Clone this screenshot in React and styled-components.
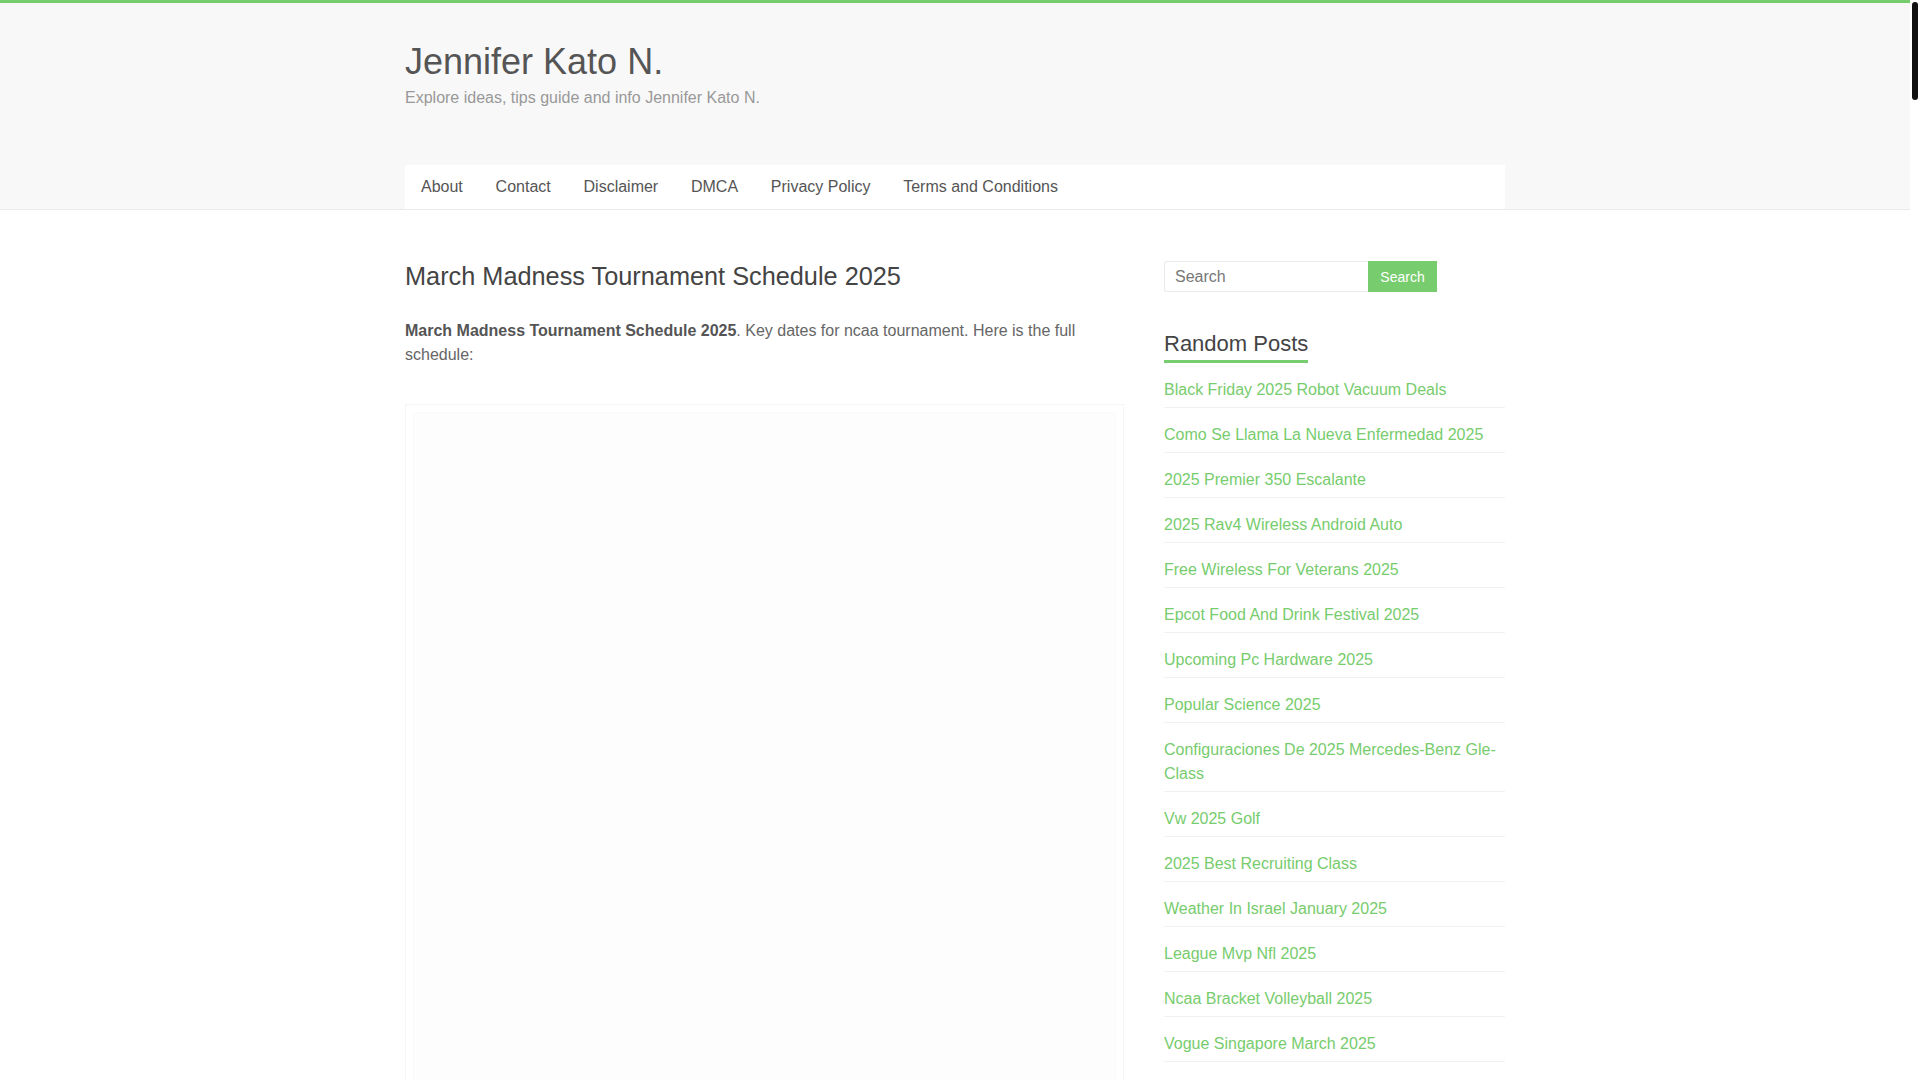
import React from 'react';
import styled, { createGlobalStyle } from 'styled-components';

const GlobalStyle = createGlobalStyle`
  html, body {
    margin: 0;
    padding: 0;
    background: #ffffff;
  }

  html {
    scrollbar-width: none;
  }

  html::-webkit-scrollbar {
    display: none;
  }

  body {
    font-family: 'Liberation Sans', Arial, sans-serif;
    color: #666666;
  }
`;

const green = '#77cc6d';

// the page is drawn as if a 10px scrollbar takes the right edge
const Page = styled.div`
  width: calc(100vw - 10px);
`;

const ScrollTrack = styled.div`
  position: fixed;
  top: 0;
  right: 0;
  width: 10px;
  height: 100vh;
  background: #ffffff;
  z-index: 10;
`;

const ScrollThumb = styled.div`
  position: absolute;
  top: 2px;
  left: 2px;
  width: 6px;
  height: 98px;
  border-radius: 3px;
  background: #111111;
`;

const Header = styled.header`
  background: #f8f8f8;
  border-top: 3px solid ${green};
  border-bottom: 1px solid #eaeaea;
`;

const Wrap = styled.div`
  width: 1100px;
  margin: 0 auto;
`;

const Branding = styled.div`
  padding: 37px 0 55px;
`;

const SiteTitle = styled.h1`
  margin: 0;
  font-size: 36px;
  line-height: 43px;
  font-weight: 400;
  color: #555555;
`;

const Tagline = styled.p`
  margin: 3px 0 0;
  font-size: 16px;
  line-height: 24px;
  color: #999999;
`;

const Nav = styled.nav`
  background: #ffffff;
  display: flex;
  height: 44px;
  align-items: center;
`;

const NavLink = styled.a`
  padding: 0 16.4px;
  font-size: 16px;
  line-height: 44px;
  color: #555555;
  text-decoration: none;
  cursor: pointer;

  &:first-child {
    padding-left: 16px;
  }
`;

const Main = styled(Wrap)`
  display: flex;
  justify-content: space-between;
  padding-top: 51px;
`;

const Article = styled.article`
  width: 719px;
`;

const PostTitle = styled.h2`
  margin: 0 0 28px;
  font-size: 25.3px;
  line-height: 30px;
  font-weight: 400;
  color: #444444;
`;

const Paragraph = styled.p`
  margin: 0 0 37px;
  font-size: 16px;
  line-height: 24px;
  color: #666666;

  strong {
    color: #555555;
  }
`;

const ImageFrame = styled.div`
  border: 1px solid #f5f5f5;
  padding: 7px;
  margin-bottom: 24px;
`;

const ImageArea = styled.div`
  height: ${p => p.$h}px;
  background: #fdfdfd;
  border: 1px solid #fafafa;
`;

const Sidebar = styled.aside`
  width: 341px;
`;

const SearchForm = styled.form`
  display: flex;
  width: 273px;
  height: 31px;
`;

const SearchInput = styled.input`
  flex: 1;
  min-width: 0;
  border: 1px solid #eaeaea;
  border-right: none;
  border-radius: 3px 0 0 3px;
  padding: 0 10px;
  font-family: 'Liberation Sans', Arial, sans-serif;
  font-size: 16px;
  color: #666666;
  outline: none;

  &::placeholder {
    color: #777777;
  }
`;

const SearchButton = styled.button`
  width: 69px;
  border: none;
  background: ${green};
  color: #ffffff;
  font-family: 'Liberation Sans', Arial, sans-serif;
  font-size: 14px;
  padding: 0;
  cursor: pointer;
`;

const Widget = styled.section`
  margin-top: 39px;
`;

const WidgetTitle = styled.h3`
  display: inline-block;
  margin: 0;
  font-size: 22px;
  line-height: 26px;
  font-weight: 400;
  color: #444444;
  padding-bottom: 3px;
  border-bottom: 3px solid ${green};
`;

const PostList = styled.ul`
  list-style: none;
  margin: 0;
  padding: 0;
`;

const PostItem = styled.li`
  padding: 15px 0 5px;
  border-bottom: 1px solid #f2f2f2;
  font-size: 16px;
  line-height: 24px;

  a {
    color: ${green};
    text-decoration: none;
  }
`;

const posts = [
  'Black Friday 2025 Robot Vacuum Deals',
  'Como Se Llama La Nueva Enfermedad 2025',
  '2025 Premier 350 Escalante',
  '2025 Rav4 Wireless Android Auto',
  'Free Wireless For Veterans 2025',
  'Epcot Food And Drink Festival 2025',
  'Upcoming Pc Hardware 2025',
  'Popular Science 2025',
  'Configuraciones De 2025 Mercedes-Benz Gle-Class',
  'Vw 2025 Golf',
  '2025 Best Recruiting Class',
  'Weather In Israel January 2025',
  'League Mvp Nfl 2025',
  'Ncaa Bracket Volleyball 2025',
  'Vogue Singapore March 2025',
  'Nfl Draft 2025 Mock Draft',
  'Best Family Suv 2025',
  'Chinese New Year 2025 Animal',
  'Honda Civic Type R 2025 Price',
  'Super Bowl 2025 Halftime Show',
];

const menu = ['About', 'Contact', 'Disclaimer', 'DMCA', 'Privacy Policy', 'Terms and Conditions'];

const frames = [1400, 1400, 1400, 1400, 1400, 1400, 1400, 1200];

export default function App() {
  return (
    <>
      <GlobalStyle />
      <ScrollTrack>
        <ScrollThumb />
      </ScrollTrack>
      <Page>
        <Header>
          <Wrap>
            <Branding>
              <SiteTitle>Jennifer Kato N.</SiteTitle>
              <Tagline>Explore ideas, tips guide and info Jennifer Kato N.</Tagline>
            </Branding>
            <Nav>
              {menu.map(item => (
                <NavLink key={item}>{item}</NavLink>
              ))}
            </Nav>
          </Wrap>
        </Header>

        <Main>
          <Article>
            <PostTitle>March Madness Tournament Schedule 2025</PostTitle>
            <Paragraph>
              <strong>March Madness Tournament Schedule 2025</strong>. Key dates for ncaa tournament. Here is the full
              schedule:
            </Paragraph>
            {frames.map((h, i) => (
              <ImageFrame key={i}>
                <ImageArea $h={h} />
              </ImageFrame>
            ))}
          </Article>

          <Sidebar>
            <SearchForm onSubmit={e => e.preventDefault()}>
              <SearchInput placeholder="Search" />
              <SearchButton type="submit">Search</SearchButton>
            </SearchForm>

            <Widget>
              <WidgetTitle>Random Posts</WidgetTitle>
              <PostList>
                {posts.map(post => (
                  <PostItem key={post}>
                    <a href="#">{post}</a>
                  </PostItem>
                ))}
              </PostList>
            </Widget>
          </Sidebar>
        </Main>
      </Page>
    </>
  );
}
